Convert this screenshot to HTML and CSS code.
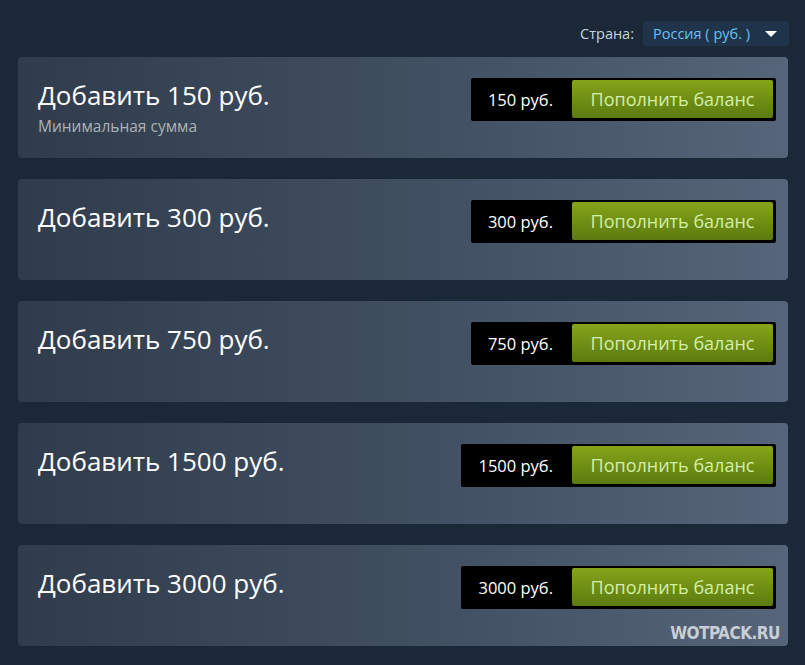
FILE: index.html
```html
<!DOCTYPE html>
<html lang="ru">
<head>
  <meta charset="UTF-8">
  <title>Пополнение баланса</title>
  <link rel="stylesheet" href="styles.css">
</head>
<body>
  <div class="page">
    <div class="country-row">
      <span class="country-label">Страна:</span>
      <div class="country-select">
        <span>Россия ( руб. )</span>
        <span class="arrow"></span>
      </div>
    </div>

    <div class="fund-card">
      <div class="fund-info">
        <h2>Добавить 150 руб.</h2>
        <p class="fund-note">Минимальная сумма</p>
      </div>
      <div class="fund-action">
        <span class="fund-price">150 руб.</span>
        <button class="fund-btn">Пополнить баланс</button>
      </div>
    </div>

    <div class="fund-card">
      <div class="fund-info">
        <h2>Добавить 300 руб.</h2>
      </div>
      <div class="fund-action">
        <span class="fund-price">300 руб.</span>
        <button class="fund-btn">Пополнить баланс</button>
      </div>
    </div>

    <div class="fund-card">
      <div class="fund-info">
        <h2>Добавить 750 руб.</h2>
      </div>
      <div class="fund-action">
        <span class="fund-price">750 руб.</span>
        <button class="fund-btn">Пополнить баланс</button>
      </div>
    </div>

    <div class="fund-card">
      <div class="fund-info">
        <h2>Добавить 1500 руб.</h2>
      </div>
      <div class="fund-action">
        <span class="fund-price">1500 руб.</span>
        <button class="fund-btn">Пополнить баланс</button>
      </div>
    </div>

    <div class="fund-card">
      <div class="fund-info">
        <h2>Добавить 3000 руб.</h2>
      </div>
      <div class="fund-action">
        <span class="fund-price">3000 руб.</span>
        <button class="fund-btn">Пополнить баланс</button>
      </div>
      <span class="watermark">WOTPACK.RU</span>
    </div>
  </div>
</body>
</html>
```

FILE: styles.css
```css
body {
  margin: 0;
  background-color: #1b2838;
  font-family: 'Open Sans', 'Liberation Sans', sans-serif;
  color: #fff;
}
.page {
  width: 770px;
  padding: 21px 17px 0 18px;
}
.country-row {
  display: flex;
  justify-content: flex-end;
  align-items: center;
  margin-bottom: 11px;
  margin-right: -1px;
}
.country-label {
  font-size: 14.5px;
  color: #c6d4df;
  margin-right: 9px;
}
.country-select {
  display: flex;
  align-items: center;
  height: 25px;
  padding: 0 12px 0 10px;
  background-color: #1f344a;
  border-radius: 3px;
  font-size: 14.5px;
  color: #67c1f5;
}
.arrow {
  width: 0;
  height: 0;
  margin-left: 15px;
  border-left: 6px solid transparent;
  border-right: 6px solid transparent;
  border-top: 6px solid #fff;
}
.fund-card {
  position: relative;
  display: flex;
  justify-content: space-between;
  align-items: flex-start;
  height: 101px;
  box-sizing: border-box;
  padding: 21px 12px 0 20px;
  margin-bottom: 21px;
  border-radius: 4px;
  background: linear-gradient(to right, #303c4c 0%, #435264 60%, #566579 100%);
}
.fund-info h2 {
  margin: 1px 0 0;
  font-weight: 400;
  font-size: 26px;
  line-height: 32px;
  color: #fff;
}
.fund-note {
  margin: 4px 0 0;
  font-size: 15.5px;
  color: #acb2b8;
}
.fund-action {
  display: flex;
  align-items: center;
  padding: 2px 3px 3px 17px;
  background-color: #000;
  border-radius: 2px;
}
.fund-price {
  font-size: 16.5px;
  color: #fff;
  margin-right: 19px;
}
.fund-btn {
  width: 201px;
  height: 38px;
  border: none;
  border-radius: 2px;
  background: linear-gradient(to bottom, #86a41a 0%, #6c8b13 60%, #5c7a0f 100%);
  color: #d2efa9;
  font-family: 'Open Sans', 'Liberation Sans', sans-serif;
  font-size: 18px;
  cursor: pointer;
}
.watermark {
  position: absolute;
  right: 8px;
  bottom: 3px;
  font-family: 'DejaVu Sans Condensed', 'DejaVu Sans', sans-serif;
  font-weight: bold;
  font-size: 17px;
  color: #c8ced6;
  letter-spacing: -0.5px;
}
```
